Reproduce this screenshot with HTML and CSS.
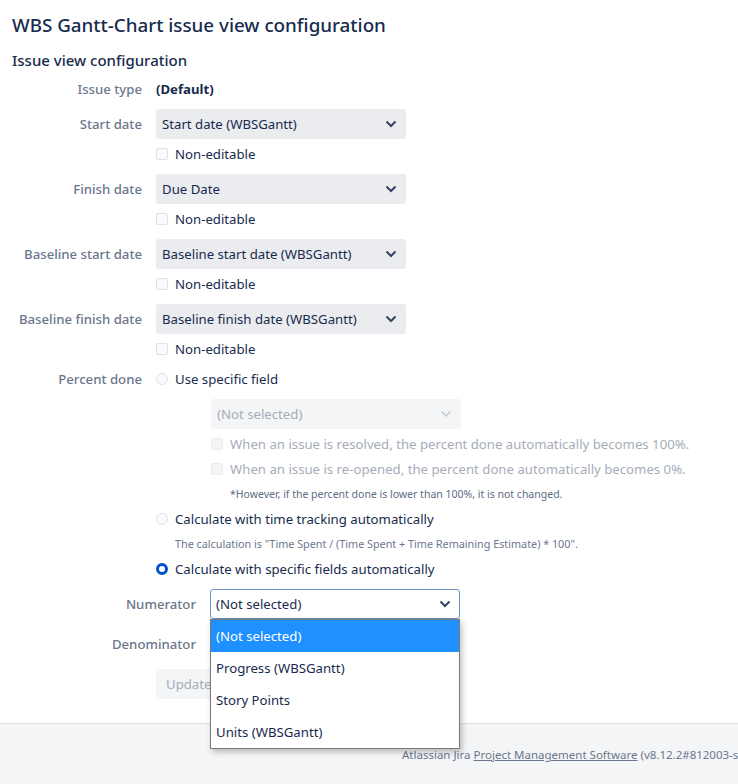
FILE: index.html
```html
<!DOCTYPE html>
<html lang="en">
<head>
    <meta charset="UTF-8">
    <meta name="viewport" content="width=device-width, initial-scale=1.0">
    <title>WBS Gantt-Chart issue view configuration</title>
    <link rel="stylesheet" href="styles.css">
</head>
<body>
    <div class="page">
        <h1>WBS Gantt-Chart issue view configuration</h1>
        <h2>Issue view configuration</h2>

        <div class="form">
            <div class="row">
                <div class="label">Issue type</div>
                <div class="value"><div class="line strong">(Default)</div></div>
            </div>

            <div class="row">
                <div class="label">Start date</div>
                <div class="value">
                    <div class="select">Start date (WBSGantt)<svg class="chev" viewBox="0 0 12 8"><path d="M1.5 1.5 6 6l4.5-4.5"/></svg></div>
                    <label class="line"><span class="box"></span>Non-editable</label>
                </div>
            </div>

            <div class="row">
                <div class="label">Finish date</div>
                <div class="value">
                    <div class="select">Due Date<svg class="chev" viewBox="0 0 12 8"><path d="M1.5 1.5 6 6l4.5-4.5"/></svg></div>
                    <label class="line"><span class="box"></span>Non-editable</label>
                </div>
            </div>

            <div class="row">
                <div class="label">Baseline start date</div>
                <div class="value">
                    <div class="select">Baseline start date (WBSGantt)<svg class="chev" viewBox="0 0 12 8"><path d="M1.5 1.5 6 6l4.5-4.5"/></svg></div>
                    <label class="line"><span class="box"></span>Non-editable</label>
                </div>
            </div>

            <div class="row">
                <div class="label">Baseline finish date</div>
                <div class="value">
                    <div class="select">Baseline finish date (WBSGantt)<svg class="chev" viewBox="0 0 12 8"><path d="M1.5 1.5 6 6l4.5-4.5"/></svg></div>
                    <label class="line"><span class="box"></span>Non-editable</label>
                </div>
            </div>

            <div class="row">
                <div class="label">Percent done</div>
                <div class="value">
                    <label class="line"><span class="radio"></span>Use specific field</label>
                    <div class="sub">
                        <div class="select disabled">(Not selected)<svg class="chev" viewBox="0 0 12 8"><path d="M1.5 1.5 6 6l4.5-4.5"/></svg></div>
                        <label class="line muted"><span class="box"></span>When an issue is resolved, the percent done automatically becomes 100%.</label>
                        <label class="line muted"><span class="box"></span>When an issue is re-opened, the percent done automatically becomes 0%.</label>
                        <div class="line note">*However, if the percent done is lower than 100%, it is not changed.</div>
                    </div>
                    <label class="line"><span class="radio"></span>Calculate with time tracking automatically</label>
                    <div class="line note">The calculation is "Time Spent / (Time Spent + Time Remaining Estimate) * 100".</div>
                    <label class="line"><span class="radio checked"></span>Calculate with specific fields automatically</label>

                    <div class="fields">
                        <div class="field">
                            <div class="flabel">Numerator</div>
                            <div class="dropwrap">
                                <div class="select open">(Not selected)<svg class="chev" viewBox="0 0 12 8"><path d="M1.5 1.5 6 6l4.5-4.5"/></svg></div>
                                <ul class="options">
                                    <li class="active">(Not selected)</li>
                                    <li>Progress (WBSGantt)</li>
                                    <li>Story Points</li>
                                    <li>Units (WBSGantt)</li>
                                </ul>
                            </div>
                        </div>
                        <div class="field">
                            <div class="flabel">Denominator</div>
                            <div class="select blank"></div>
                        </div>
                    </div>

                    <button class="update" disabled>Update</button>
                </div>
            </div>
        </div>
    </div>

    <footer class="footer">
        <div class="footer-text">Atlassian Jira <a href="#">Project Management Software</a> (v8.12.2#812003-sh</div>
    </footer>
</body>
</html>
```

FILE: styles.css
```css
body {
    margin: 0;
    font-family: "Noto Sans", "Open Sans", sans-serif;
    font-size: 13.2px;
    color: #172b4d;
    background: #fff;
}
.page {
    padding: 0 12px 14px 12px;
}
h1 {
    margin: 0;
    padding-top: 11px;
    font-size: 18.8px;
    font-weight: 500;
    line-height: 28px;
}
h2 {
    margin: 11px 0 0 0;
    font-size: 15px;
    font-weight: 500;
    line-height: 20px;
}
.form {
    margin-top: 9px;
}
.row {
    display: grid;
    grid-template-columns: 130px 250px;
    column-gap: 14px;
    margin-bottom: 10px;
}
.label {
    text-align: right;
    color: #6b778c;
    font-weight: 500;
    line-height: 20px;
    white-space: nowrap;
}
.row:not(:first-child) .label {
    padding-top: 5px;
}
.row:nth-last-child(1) .label {
    padding-top: 0;
}
.value {
    display: flex;
    flex-direction: column;
    gap: 5px;
    min-width: 0;
}
.line {
    display: flex;
    align-items: center;
    gap: 7px;
    line-height: 20px;
    height: 20px;
    white-space: nowrap;
}
.strong {
    font-weight: 700;
}
.select {
    position: relative;
    box-sizing: border-box;
    width: 250px;
    height: 30px;
    padding: 0 30px 0 6px;
    line-height: 30px;
    background: #ebecf0;
    border-radius: 3px;
    white-space: nowrap;
}
.chev {
    position: absolute;
    right: 9px;
    top: 11px;
    width: 12px;
    height: 8px;
    fill: none;
    stroke: #344563;
    stroke-width: 2;
}
.select.disabled {
    background: #f4f5f7;
    color: #a5adba;
}
.select.disabled .chev {
    stroke: #c1c7d0;
    stroke-width: 1.4;
}
.box {
    box-sizing: border-box;
    width: 12px;
    height: 12px;
    border: 1.5px solid #dfe1e6;
    border-radius: 2px;
    background: #fafbfc;
    flex: none;
}
.radio {
    box-sizing: border-box;
    width: 12px;
    height: 12px;
    border: 1.5px solid #dfe1e6;
    border-radius: 50%;
    background: #fafbfc;
    flex: none;
}
.radio.checked {
    border: 3.5px solid #0052cc;
    background: #fff;
}
.sub {
    display: flex;
    flex-direction: column;
    gap: 5px;
    margin: 5px 0 0 55px;
}
.muted {
    color: #a5adba;
}
.muted .box {
    background: #f4f5f7;
    border-color: #ebecf0;
}
.note {
    font-size: 10.8px;
    color: #6b778c;
}
.sub .note {
    padding-left: 19px;
    font-size: 10.5px;
    color: #5e6c84;
}
.value > .note {
    padding-left: 19px;
}
.fields {
    display: flex;
    flex-direction: column;
    gap: 10px;
    margin: 5px 0 0 -145px;
}
.field {
    display: grid;
    grid-template-columns: 185px 250px;
    column-gap: 14px;
    align-items: center;
}
.flabel {
    text-align: right;
    color: #6b778c;
    font-weight: 500;
}
.dropwrap {
    position: relative;
}
.select.open {
    background: #fff;
    border: 1px solid #6b93c6;
    padding-left: 5px;
    line-height: 28px;
}
.select.open .chev {
    right: 8px;
    top: 10px;
}
.select.blank {
    background: transparent;
}
.options {
    position: absolute;
    left: 0;
    top: 30px;
    z-index: 2;
    box-sizing: border-box;
    width: 250px;
    margin: 0;
    padding: 0;
    list-style: none;
    background: #fff;
    border: 1px solid #7a7a7a;
    box-shadow: 2px 3px 6px rgba(0, 0, 0, 0.25);
}
.options li {
    height: 32px;
    line-height: 32px;
    padding-left: 5px;
    color: #172b4d;
}
.options li.active {
    background: #1e90ff;
    color: #fff;
}
.update {
    align-self: flex-start;
    margin-top: 5px;
    height: 30px;
    padding: 0 10px;
    font-family: inherit;
    font-size: 13.2px;
    color: #a5adba;
    background: #f4f5f7;
    border: none;
    border-radius: 3px;
}
.footer {
    background: #f4f5f7;
    border-top: 1px solid #dfe1e6;
    height: 80px;
    overflow: hidden;
}
.footer-text {
    margin: 23px 0 0 402px;
    font-size: 11.5px;
    color: #6b778c;
    white-space: nowrap;
}
.footer-text a {
    color: #6b778c;
}
```
